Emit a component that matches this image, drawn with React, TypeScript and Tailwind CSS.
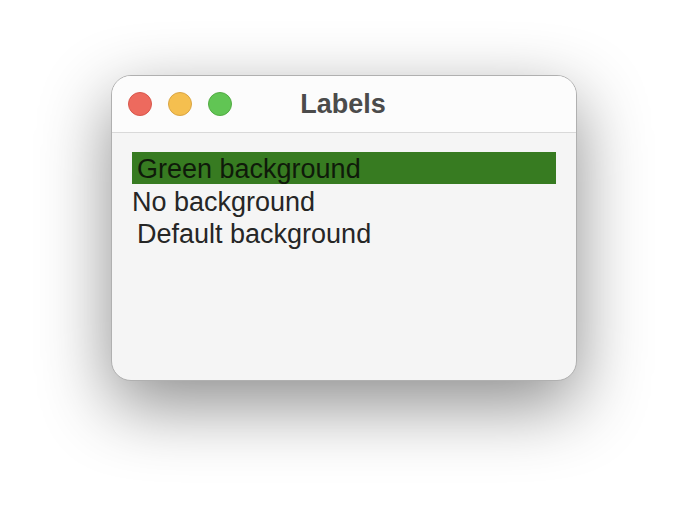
export default function App() {
  return (
    <div className="w-[688px] h-[528px] bg-white pt-[75px] font-['Liberation_Sans',Arial,sans-serif]">
      <div className="mx-auto w-[466px] h-[306px] rounded-[20px] overflow-hidden border border-[#b0b0b0] bg-[#f5f5f5] shadow-[0_24px_70px_rgba(0,0,0,0.45)] flex flex-col">
        {/* title bar */}
        <div className="h-[57px] shrink-0 bg-[#fcfcfc] border-b border-[#d9d9d9] grid grid-cols-[1fr_auto_1fr] items-center">
          <div className="flex items-center gap-[16px] pl-[16px]">
            <span className="w-[24px] h-[24px] rounded-full bg-[#ed6a5e] border border-[#d8574c]"></span>
            <span className="w-[24px] h-[24px] rounded-full bg-[#f5bf4f] border border-[#d9a544]"></span>
            <span className="w-[24px] h-[24px] rounded-full bg-[#61c554] border border-[#52ab43]"></span>
          </div>
          <div className="text-[27px] font-bold text-[#4b4b4b] leading-none -translate-x-[1px]">Labels</div>
          <div></div>
        </div>

        {/* labels */}
        <div className="flex flex-col pt-[19px] px-[20px] text-[27px] text-[#262626]">
          <div className="h-[32px] leading-[34px] pl-[5px] bg-[#377b21] text-[#0f1a0a]">Green background</div>
          <div className="h-[33px] leading-[36px]">No background</div>
          <div className="h-[32px] leading-[35px] pl-[5px]">Default background</div>
        </div>
      </div>
    </div>
  );
}
